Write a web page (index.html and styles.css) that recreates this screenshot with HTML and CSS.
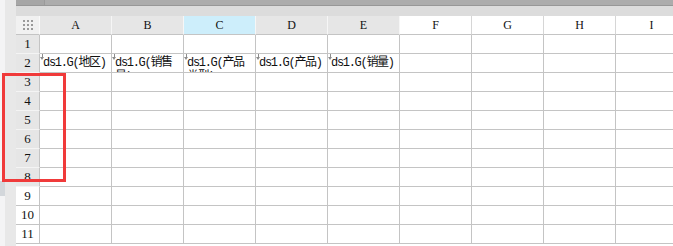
FILE: index.html
```html
<!DOCTYPE html>
<html lang="zh-CN">
<head>
    <meta charset="UTF-8">
    <title>Sheet</title>
    <link rel="stylesheet" href="styles.css">
</head>
<body>
    <div class="app">
        <div class="side">
            <div class="side-edge"><div class="side-mark"></div></div>
            <div class="side-fill"></div>
        </div>
        <div class="main">
            <div class="topbar"><div class="seg seg-first"></div><div class="seg"></div></div>
            <div class="toolbar"></div>
            <div class="sheet">
                <div class="corner">
                    <svg width="10" height="10" viewBox="0 0 10 10">
                        <g fill="#9a9a9a">
                            <rect x="0" y="0" width="2" height="2"/><rect x="4" y="0" width="2" height="2"/><rect x="8" y="0" width="2" height="2"/>
                            <rect x="0" y="4" width="2" height="2"/><rect x="4" y="4" width="2" height="2"/><rect x="8" y="4" width="2" height="2"/>
                            <rect x="0" y="8" width="2" height="2"/><rect x="4" y="8" width="2" height="2"/><rect x="8" y="8" width="2" height="2"/>
                        </g>
                    </svg>
                </div>
                <div class="col-head used">A</div>
                <div class="col-head used">B</div>
                <div class="col-head used active">C</div>
                <div class="col-head used">D</div>
                <div class="col-head used">E</div>
                <div class="col-head">F</div>
                <div class="col-head">G</div>
                <div class="col-head">H</div>
                <div class="col-head">I</div>

                <div class="row-head used">1</div>
                <div class="cell"></div><div class="cell"></div><div class="cell"></div><div class="cell"></div><div class="cell"></div><div class="cell"></div><div class="cell"></div><div class="cell"></div><div class="cell"></div>

                <div class="row-head used">2</div>
                <div class="cell field"><span class="flag"></span>ds1.G(地区)</div>
                <div class="cell field"><span class="flag"></span>ds1.G(销售<br>量)</div>
                <div class="cell field"><span class="flag"></span>ds1.G(产品<br>类型)</div>
                <div class="cell field"><span class="flag"></span>ds1.G(产品)</div>
                <div class="cell field"><span class="flag"></span>ds1.G(销量)</div>
                <div class="cell"></div><div class="cell"></div><div class="cell"></div><div class="cell"></div>

                <div class="row-head used">3</div>
                <div class="cell"></div><div class="cell"></div><div class="cell"></div><div class="cell"></div><div class="cell"></div><div class="cell"></div><div class="cell"></div><div class="cell"></div><div class="cell"></div>
                <div class="row-head used">4</div>
                <div class="cell"></div><div class="cell"></div><div class="cell"></div><div class="cell"></div><div class="cell"></div><div class="cell"></div><div class="cell"></div><div class="cell"></div><div class="cell"></div>
                <div class="row-head used">5</div>
                <div class="cell"></div><div class="cell"></div><div class="cell"></div><div class="cell"></div><div class="cell"></div><div class="cell"></div><div class="cell"></div><div class="cell"></div><div class="cell"></div>
                <div class="row-head used">6</div>
                <div class="cell"></div><div class="cell"></div><div class="cell"></div><div class="cell"></div><div class="cell"></div><div class="cell"></div><div class="cell"></div><div class="cell"></div><div class="cell"></div>
                <div class="row-head used">7</div>
                <div class="cell"></div><div class="cell"></div><div class="cell"></div><div class="cell"></div><div class="cell"></div><div class="cell"></div><div class="cell"></div><div class="cell"></div><div class="cell"></div>
                <div class="row-head used">8</div>
                <div class="cell"></div><div class="cell"></div><div class="cell"></div><div class="cell"></div><div class="cell"></div><div class="cell"></div><div class="cell"></div><div class="cell"></div><div class="cell"></div>
                <div class="row-head">9</div>
                <div class="cell"></div><div class="cell"></div><div class="cell"></div><div class="cell"></div><div class="cell"></div><div class="cell"></div><div class="cell"></div><div class="cell"></div><div class="cell"></div>
                <div class="row-head">10</div>
                <div class="cell"></div><div class="cell"></div><div class="cell"></div><div class="cell"></div><div class="cell"></div><div class="cell"></div><div class="cell"></div><div class="cell"></div><div class="cell"></div>
                <div class="row-head">11</div>
                <div class="cell"></div><div class="cell"></div><div class="cell"></div><div class="cell"></div><div class="cell"></div><div class="cell"></div><div class="cell"></div><div class="cell"></div><div class="cell"></div>
            </div>
        </div>
        <div class="mark"></div>
    </div>
</body>
</html>
```

FILE: styles.css
```css
body {
    margin: 0;
    background: #fff;
    overflow: hidden;
}
.app {
    position: relative;
    display: flex;
    width: 673px;
    height: 246px;
    overflow: hidden;
}
.side {
    display: flex;
    width: 16px;
    flex-shrink: 0;
}
.side-edge {
    width: 5px;
    background: #f4f4f5;
    padding-top: 181px;
}
.side-mark {
    height: 15px;
    background: #d3d7db;
}
.side-fill {
    flex: 1;
    background: #e8e8e8;
}
.main {
    flex: 1;
    min-width: 0;
    overflow: hidden;
}
.topbar {
    display: flex;
    height: 5px;
    background: #acacac;
    border-bottom: 1px solid #979797;
}
.seg-first {
    width: 28px;
    border-right: 1px solid #9a9a9a;
    background: #a6a6a6;
}
.toolbar {
    height: 10px;
    background: #dcdcdc;
}
.sheet {
    display: grid;
    grid-template-columns: 24px repeat(9, 72px);
    grid-auto-rows: 19px;
    width: 672px;
}
.corner, .col-head, .row-head, .cell {
    box-sizing: border-box;
}
.corner {
    display: flex;
    align-items: center;
    justify-content: center;
    background: #f1f1f1;
    border-right: 1px solid #fafafa;
    border-bottom: 1px solid #c4c4c4;
}
.col-head {
    display: flex;
    align-items: center;
    justify-content: center;
    font: 12px "Liberation Serif", serif;
    color: #111;
    background: #fff;
    border-right: 1px solid #d6d6d6;
    border-bottom: 1px solid #c4c4c4;
}
.col-head.used {
    background: #e6e6e6;
    border-right-color: #f6f6f6;
}
.col-head.active {
    background: #cdeefb;
}
.row-head {
    display: flex;
    align-items: center;
    justify-content: center;
    font: 13px "Liberation Serif", serif;
    color: #111;
    background: #fff;
    border-right: 1px solid #c4c4c4;
    border-bottom: 1px solid #c4c4c4;
}
.row-head.used {
    background: #e6e6e6;
    border-bottom-color: #f4f4f4;
}
.cell {
    border-right: 1px solid #c4c4c4;
    border-bottom: 1px solid #c4c4c4;
}
.field {
    position: relative;
    overflow: hidden;
    white-space: nowrap;
    padding: 2px 0 0 3px;
    font: 12px/14px "Liberation Mono", "Noto Sans CJK SC", monospace;
    letter-spacing: -1.3px;
    color: #111;
}
.flag {
    position: absolute;
    left: 2px;
    top: 0;
    width: 1px;
    height: 3px;
    background: #8c8c8c;
}
.flag::after {
    content: "";
    position: absolute;
    left: -2px;
    top: 3px;
    border-left: 2.5px solid transparent;
    border-right: 2.5px solid transparent;
    border-top: 3px solid #8c8c8c;
}
.mark {
    position: absolute;
    left: 2px;
    top: 73px;
    width: 64px;
    height: 109px;
    box-sizing: border-box;
    border: 3px solid #f03a3a;
}
```
